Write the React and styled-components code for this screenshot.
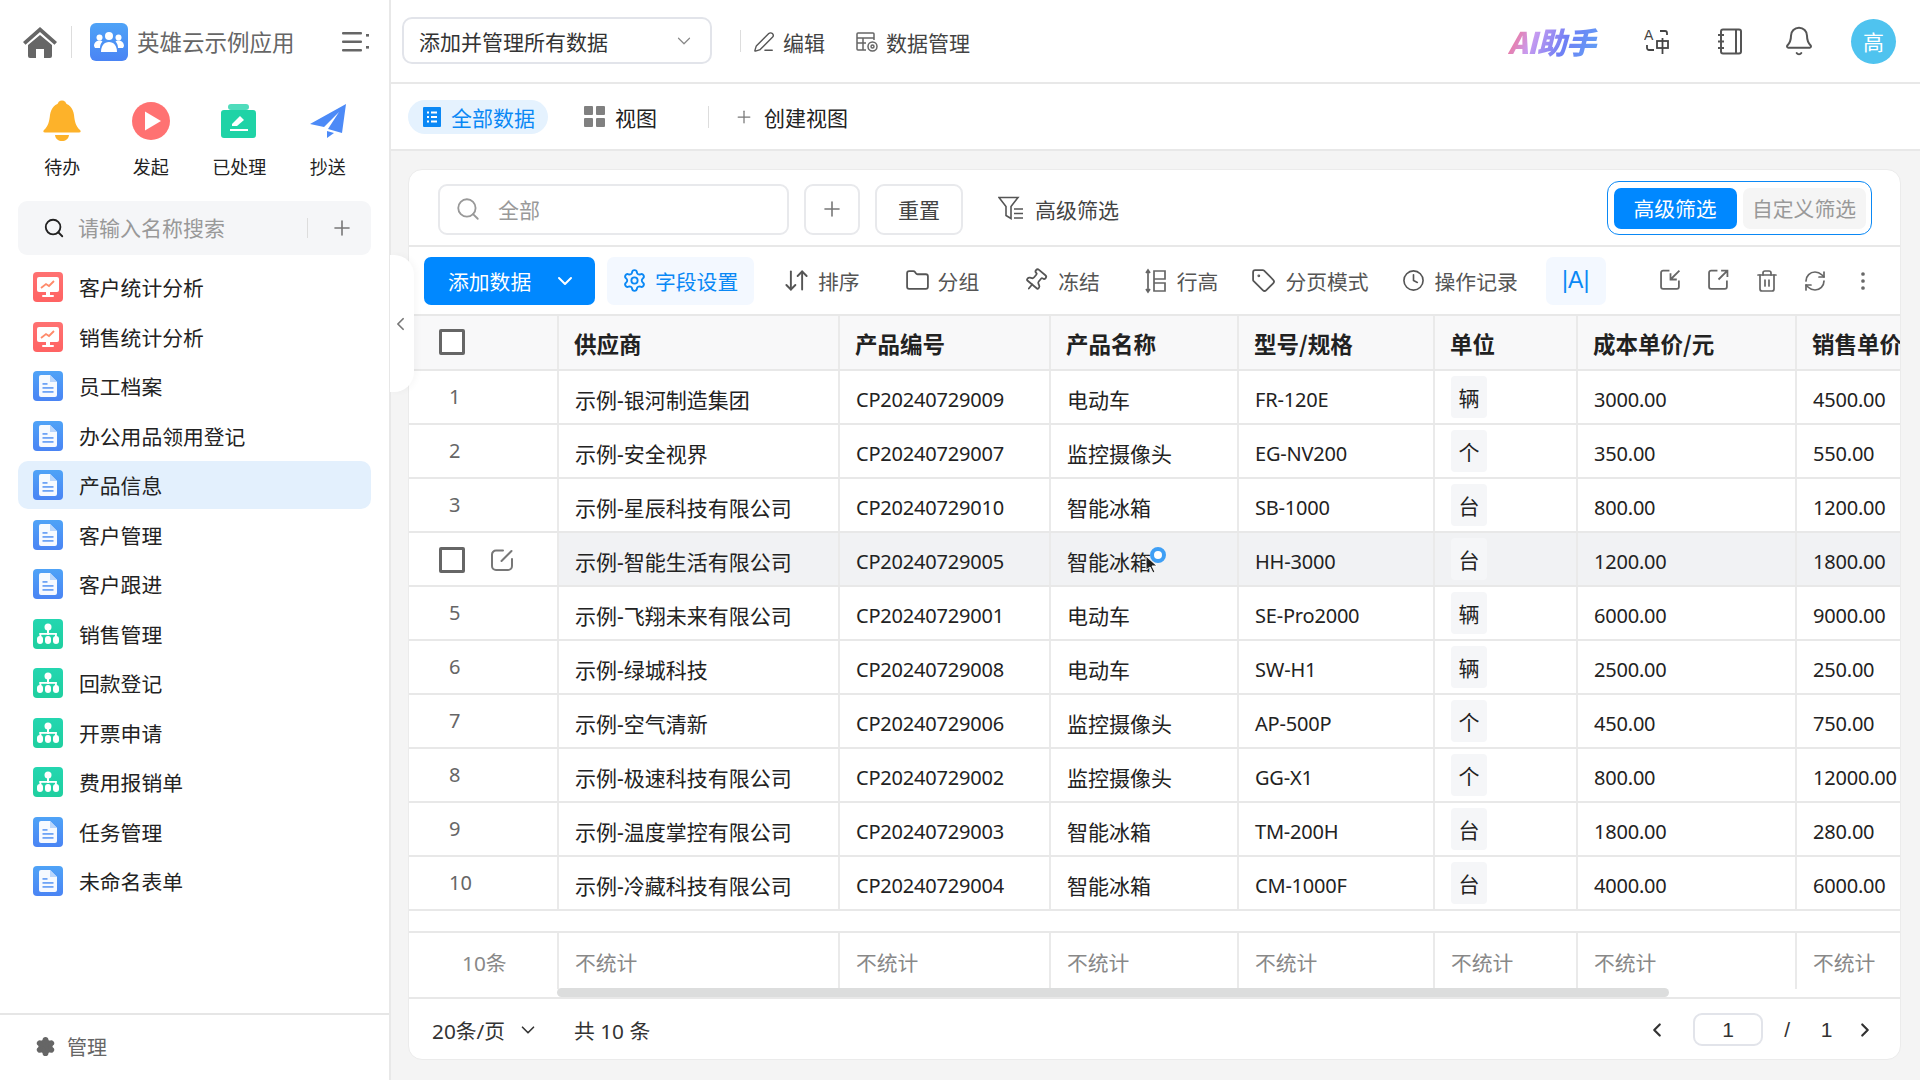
import React from 'react';
import styled, { createGlobalStyle } from 'styled-components';
import { Search, Plus, ChevronDown, ChevronLeft, ChevronRight, Settings, Folder, Pin, Tag, Clock, MoreVertical, Bell, RefreshCw, Trash2, PenLine, ArrowDownUp } from 'lucide-react';

const Global = createGlobalStyle`
  html, body { margin: 0; padding: 0; background: #fff; }
  * { box-sizing: border-box; }
  body { font-family: "Noto Sans", "Noto Sans CJK SC", sans-serif; font-size: 21px; color: #222; }
`;

const Page = styled.div`display: flex; width: 1920px; height: 1080px; overflow: hidden; position: relative; background: #f4f4f4;`;
const Sidebar = styled.aside`width: 391px; flex: none; height: 100%; background: #fff; border-right: 2px solid #e8e8e8; display: flex; flex-direction: column;`;
const SideTop = styled.div`height: 83px; display: flex; align-items: center; padding: 0 0 0 22px; flex: none;`;
const VLine = styled.span`display: block; flex: none; width: 1px; height: ${p => p.$h || 24}px; background: ${p => p.$c || '#ddd'}; margin: 0 ${p => p.$mr ?? 0}px 0 ${p => p.$ml ?? 0}px;`;
const AppBadge = styled.span`width: 38px; height: 38px; border-radius: 6px; background: linear-gradient(#4fa3f7, #4a84f4); display: flex; align-items: center; justify-content: center; flex: none;`;
const AppTitle = styled.span`font-size: 22.5px; line-height: 30px; color: #666; margin-left: 9px; width: 205px; padding-top: 3px;`;
const Quick = styled.div`display: grid; grid-template-columns: repeat(4, 88.5px); padding: 18px 0 0 18px; height: 118px; flex: none;`;
const QuickItem = styled.div`display: flex; flex-direction: column; align-items: center; font-size: 18px; line-height: 24px; color: #222; gap: 14px;`;
const QuickIcon = styled.span`display: flex; height: 40px; align-items: center; justify-content: center;`;
const SideSearch = styled.div`margin: 0 18px; height: 54px; border-radius: 9px; background: #f5f6f8; display: flex; align-items: center; padding-left: 25px; flex: none;`;
const SidePlaceholder = styled.span`color: #999; font-size: 21px; margin-left: 13px; width: 229px; line-height: 28px;`;
const Nav = styled.nav`display: flex; flex-direction: column; gap: 1.5px; padding: 8px 18px 0; flex: 1;`;
const NavItem = styled.div`height: 48px; border-radius: 10px; display: flex; align-items: center; gap: 16px; padding-left: 15px; font-size: 20.8px; color: #222; background: ${p => p.$active ? '#e3f0fd' : 'transparent'};`;
const NavIcon = styled.span`width: 30px; height: 30px; border-radius: 4px; display: flex; align-items: center; justify-content: center; flex: none; background: ${p => p.$bg};`;
const SideFoot = styled.div`height: 67px; border-top: 2px solid #e6e6e6; display: flex; align-items: center; padding: 0 0 2px 35px; gap: 11px; color: #666; font-size: 20px; flex: none;`;

const Collapse = styled.div`position: absolute; left: 390px; top: 255px; width: 24px; height: 137px; background: #fff; border-radius: 0 20px 20px 0; display: flex; align-items: center; justify-content: center; padding-right: 3px; color: #777; box-shadow: 3px 0 6px rgba(0,0,0,.03);`;

const Main = styled.main`flex: 1; display: flex; flex-direction: column; min-width: 0;`;
const Header = styled.header`height: 84px; flex: none; background: #fff; border-bottom: 2px solid #e8e8e8; display: flex; align-items: center; padding: 0 24px 0 11px;`;
const Select = styled.div`width: 310px; height: 47px; border: 2px solid #e2e4ea; border-radius: 10px; display: flex; align-items: center; justify-content: space-between; padding: 0 15px 0 15px; font-size: 21px; color: #333; margin-top: -1px;`;
const HeadBtn = styled.span`display: flex; align-items: center; gap: 8px; color: #444; font-size: 21px; margin-left: ${p => p.$ml}px; padding-top: 1px;`;
const HeadRight = styled.div`margin-left: auto; display: flex; align-items: center;`;
const AiLogo = styled.span`font: italic 900 30px/34px "Noto Sans CJK SC", "Noto Sans", sans-serif; letter-spacing: -0.8px; background: linear-gradient(115deg, #ff6a7a 0%, #c89bf0 30%, #6f7ff5 62%, #5fa2f5 100%); -webkit-background-clip: text; background-clip: text; color: transparent; width: 90px; white-space: nowrap;`;
const HeadIcon = styled.span`display: flex; color: #555; margin-left: ${p => p.$ml}px;`;
const Avatar = styled.span`width: 45px; height: 45px; border-radius: 50%; background: #4fc3ef; color: #fff; font-size: 21px; display: flex; align-items: center; justify-content: center; margin-left: ${p => p.$ml}px;`;

const TabBar = styled.div`height: 67px; flex: none; background: #fff; border-bottom: 2px solid #e8e8e8; display: flex; align-items: center; padding: 0 0 0 17px; font-size: 21px;`;
const ActiveTab = styled.span`height: 34px; width: 140px; border-radius: 17px; background: #e5f2fe; color: #0a88f5; display: flex; align-items: center; gap: 10px; padding-left: 15px;`;
const Tab = styled.span`display: flex; align-items: center; gap: 10px; color: #222; margin-left: ${p => p.$ml}px;`;

const Content = styled.div`flex: 1; padding: 18px 19px 20px 17px; min-height: 0;`;
const Card = styled.section`height: 100%; background: #fff; border: 1px solid #ebebeb; border-radius: 14px; display: flex; flex-direction: column; overflow: hidden;`;
const FilterRow = styled.div`height: 77px; flex: none; border-bottom: 2px solid #e8e8e8; display: flex; align-items: center; padding: 0 29px 0 30px; margin: 0 -1px;`;
const SearchBox = styled.div`width: 351px; height: 51px; border: 2px solid #e8e9ec; border-radius: 9px; display: flex; align-items: center; gap: 17px; padding: 0 0 2px 15px; color: #999; margin-top: 4px;`;
const OutlineBtn = styled.div`height: 51px; width: ${p => p.$w}px; margin-left: ${p => p.$ml}px; border: 2px solid #e8e9ec; border-radius: 9px; display: flex; align-items: center; justify-content: center; padding-bottom: 2px; color: #444; margin-top: 4px;`;
const AdvFilter = styled.span`display: flex; align-items: center; gap: 10px; color: #444; margin: 2px 0 0 35px;`;
const Toggle = styled.div`margin: 1px 0 0 auto; width: 265px; height: 54px; border: 1.5px solid #0a88f5; border-radius: 12px; padding: 5.5px; display: flex; gap: 6px;`;
const ToggleBtn = styled.span`flex: 1; border-radius: 7px; display: flex; align-items: center; justify-content: center; font-size: 20.8px; background: ${p => p.$on ? '#0088ff' : '#f5f5f5'}; color: ${p => p.$on ? '#fff' : '#999'};`;

const Toolbar = styled.div`height: 67px; flex: none; display: flex; align-items: center; padding: 0 0 0 15px; font-size: 20.8px; color: #555;`;
const AddBtn = styled.div`width: 171px; height: 48px; border-radius: 7px; background: #0088ff; color: #fff; display: flex; align-items: center; justify-content: space-between; padding: 0 18px 0 24px;`;
const FieldBtn = styled.div`width: 147px; height: 48px; border-radius: 7px; margin-left: 12px; background: #f3f8ff; color: #0a88f5; display: flex; align-items: center; gap: 8px; padding-left: 15px;`;
const ToolItem = styled.span`display: flex; align-items: center; gap: ${p => p.$gap ?? 10}px; margin-left: ${p => p.$ml}px; white-space: nowrap;`;
const FontBtn = styled.span`width: 60px; height: 48px; border-radius: 7px; background: #f3f8ff; color: #0a88f5; display: flex; align-items: center; justify-content: center; margin-left: 28px; font-family: "Liberation Sans", sans-serif; font-size: 23px;`;
const ToolIcons = styled.div`margin-left: 41px; display: grid; grid-template-columns: repeat(5, 48px); justify-items: center; color: #666;`;

const columns = '148px 281px 211px 188px 196px 143px 219px 106px';
const HeadRow = styled.div`height: 57px; flex: none; display: grid; grid-template-columns: ${columns}; background: #f8f8f9; border-top: 2px solid #e8e8e8; border-bottom: 2px solid #e8e8e8; font-weight: 700; color: #222; white-space: nowrap; font-family: "Noto Sans CJK SC", sans-serif; font-size: 22.5px;`;
const HeadCell = styled.div`display: flex; align-items: center; padding: 0 0 ${p => p.$first ? 1 : 0}px ${p => p.$pl ?? 16}px; border-left: ${p => p.$first ? 0 : '2px solid #eaeaea'}; overflow: hidden;`;
const Row = styled.div`height: 54px; flex: none; display: grid; grid-template-columns: ${columns}; border-bottom: 2px solid #e8e8e8;`;
const IndexCell = styled.div`display: flex; align-items: center; padding: 0 0 1px 40px; color: #666; font-size: 20px;`;
const HoverIndex = styled.div`display: flex; align-items: center; padding: 1px 0 0 30px; gap: 25px; color: #777;`;
const Cell = styled.div`display: flex; align-items: center; padding: ${p => p.$latin ? 5 : 3}px 0 0 ${p => p.$pl ?? 16}px; border-left: 2px solid #eaeaea; white-space: nowrap; overflow: hidden; font-size: ${p => p.$latin ? 20 : 21}px; letter-spacing: ${p => p.$latin ? '-0.2px' : 0}; color: #222; background: ${p => p.$hover ? '#f1f2f4' : 'transparent'};`;
const UnitTag = styled.span`width: 36px; height: 42px; border-radius: 4px; background: #f5f6f8; display: flex; align-items: center; justify-content: center; margin-top: -3px;`;
const CheckBox = styled.span`display: block; width: 26px; height: 26px; border: 3px solid #666; border-radius: 2px; flex: none; background: #fff;`;
const Spacer = styled.div`height: 22px; flex: none; border-bottom: 2px solid #e8e8e8;`;
const SumWrap = styled.div`height: 66px; flex: none; position: relative; border-bottom: 2px solid #e8e8e8;`;
const SumRow = styled.div`height: 56px; display: grid; grid-template-columns: ${columns}; color: #888; font-size: 20.8px;`;
const SumCell = styled.div`display: flex; align-items: center; padding: 1px 0 0 ${p => p.$pl ?? 16}px; border-left: ${p => p.$first ? 0 : '2px solid #eaeaea'};`;
const ScrollBar = styled.div`position: absolute; left: 148px; bottom: 0; width: 1112px; height: 9px; background: #dcdddd; border-radius: 5px;`;
const Pager = styled.div`flex: 1; display: flex; align-items: center; padding: 1px 0 0 23px; color: #333; font-size: 20.8px;`;
const PageSize = styled.span`display: flex; align-items: center; gap: 12px; width: 142px;`;
const PagerRight = styled.div`margin-left: auto; display: flex; align-items: center; padding-right: 24px; font-family: "Liberation Sans", sans-serif; font-size: 21px;`;
const PageInput = styled.span`width: 70px; height: 33px; border: 2px solid #e2e4ea; border-radius: 9px; display: flex; align-items: center; justify-content: center; margin: 0 21px 0 25px;`;
const PageTotal = styled.span`width: 62px; text-align: center; padding-left: 11px;`;

const CursorRing = styled.span`position: absolute; left: 1150px; top: 547px; width: 16px; height: 16px; border-radius: 50%; border: 4px solid #3f9ff5; background: #fff;`;
const CursorArrow = styled.svg`position: absolute; left: 1145px; top: 555px;`;

const Home = () => <svg width="36" height="34" viewBox="0 0 36 34"><path d="M18 2 1 17l2.500 2.800L18 7l14.500 12.800L35 17z" fill="#666"/><path d="M6 20 18 10l12 10v11a2 2 0 0 1-2 2h-6v-9h-8v9H8a2 2 0 0 1-2-2z" fill="#666"/></svg>;
const People = () => <svg width="30" height="22" viewBox="0 0 30 22" fill="#fff"><circle cx="15" cy="5" r="4"/><circle cx="5.500" cy="6.500" r="3"/><circle cx="24.500" cy="6.500" r="3"/><path d="M7 21c0-6 3-10 8-10s8 4 8 10z"/><path d="M0 15c0-3 2-5.500 5.500-5.500 1.500 0 2.500.5 3 1C7 12 6 14 6 17H1zM30 15c0-3-2-5.500-5.500-5.500-1.500 0-2.500.5-3 1 1.500 1.500 2.500 3.500 2.500 6.500h5z"/></svg>;
const MenuDots = () => <svg width="28" height="22" viewBox="0 0 28 22" fill="#666"><rect width="20" height="2.600" x="0" y="1" rx="1"/><rect width="20" height="2.600" x="0" y="9.500" rx="1"/><rect width="20" height="2.600" x="0" y="18" rx="1"/><rect width="3" height="2.600" x="24" y="3"/><rect width="3" height="2.600" x="24" y="15"/></svg>;
const BellFill = () => <svg width="40" height="42" viewBox="0 0 40 42"><circle cx="20" cy="5" r="4.500" fill="#fdb22a"/><path d="M20 3c-7 0-11 5-12 12-.7 6-1.500 11-6 15-1 1-1 2.500 1 2.500h34c2 0 2-1.500 1-2.500-4.500-4-5.300-9-6-15C31 8 27 3 20 3z" fill="#fdb22a"/><path d="M13 35h14c-.5 4-3.500 6-7 6s-6.500-2-7-6z" fill="#fdb22a"/></svg>;
const Play = () => <svg width="40" height="40" viewBox="0 0 40 40"><circle cx="20" cy="20" r="19" fill="#ff7272"/><path d="M14 10.500 30 20l-16 9.500z" fill="#fff"/></svg>;
const Done = () => <svg width="36" height="34" viewBox="0 0 36 34"><rect x="7" y="0" width="21" height="6" rx="3" fill="#4fdcbc"/><rect x="0" y="6" width="35" height="28" rx="3" fill="#1fd3a6"/><path d="M11 20 19 12l4 4-7 6h-5z" fill="#fff"/><rect x="9" y="25" width="18" height="2" fill="#fff"/></svg>;
const Plane = () => <svg width="38" height="36" viewBox="0 0 38 36"><path d="M37 1 1 21l14 3L30 9 19 26l14 4z" fill="#4c8af7"/><path d="M18 28v7l7-5z" fill="#4c8af7"/></svg>;
const Doc = () => <svg width="18" height="22" viewBox="0 0 18 22"><path d="M2 0h9l7 7v13a2 2 0 0 1-2 2H2a2 2 0 0 1-2-2V2a2 2 0 0 1 2-2z" fill="#fff" opacity=".95"/><path d="M11 0l7 7h-7z" fill="#b9d6fc"/><rect x="3.500" y="8" width="5" height="1.800" fill="#6ea4f6"/><rect x="3.500" y="12" width="11" height="1.800" fill="#6ea4f6"/><rect x="3.500" y="16" width="11" height="1.800" fill="#6ea4f6"/></svg>;
const Chart = () => <svg width="22" height="22" viewBox="0 0 22 22"><rect x="0" y="1" width="22" height="15" rx="2" fill="#fff"/><rect x="9" y="16" width="4" height="3" fill="#fff"/><rect x="5" y="19" width="12" height="2" rx="1" fill="#fff"/><path d="M4 12l5-4 3 2 5-5" stroke="#ff8a6a" strokeWidth="1.800" fill="none"/></svg>;
const Org = () => <svg width="24" height="22" viewBox="0 0 24 22" fill="#fff"><circle cx="12" cy="4" r="3.500"/><rect x="11" y="6" width="2" height="6"/><rect x="3.500" y="10" width="17" height="1.800"/><rect x="3.500" y="10" width="1.800" height="4"/><rect x="19" y="10" width="1.800" height="4"/><rect x="1" y="13" width="6" height="8" rx="3"/><rect x="9" y="13" width="6" height="8" rx="3"/><rect x="17" y="13" width="6" height="8" rx="3"/></svg>;
const Translate = () => <svg width="26" height="26" viewBox="0 0 26 26" fill="none" stroke="#444" strokeWidth="1.800"><text x="0" y="12" fontSize="14" fill="#444" stroke="none" fontFamily="Liberation Sans">A</text><path d="M16 3h5a2 2 0 0 1 2 2v2M10 22H5a2 2 0 0 1-2-2v-3"/><rect x="13" y="13" width="11" height="7"/><path d="M18.500 10v16"/></svg>;
const Notebook = () => <svg width="26" height="27" viewBox="0 0 26 27" fill="none" stroke="#555" strokeWidth="2"><rect x="4" y="1.500" width="20" height="24" rx="2"/><path d="M19 1.500v24M1 7h6M1 13.500h6M1 20h6"/></svg>;
const DataMgr = () => <svg width="22" height="20" viewBox="0 0 22 20" fill="none" stroke="#666" strokeWidth="1.500"><path d="M10 18H2a1 1 0 0 1-1-1V2a1 1 0 0 1 1-1h15a1 1 0 0 1 1 1v6M1 6h17M1 11h9M7 6v12"/><circle cx="16.500" cy="14.500" r="4.500"/><circle cx="16.500" cy="14.500" r="1.500"/></svg>;
const Grid = () => <svg width="21" height="21" viewBox="0 0 21 21" fill="#808080"><rect width="9" height="9" rx="1"/><rect x="12" width="9" height="9" rx="1"/><rect y="12" width="9" height="9" rx="1"/><rect x="12" y="12" width="9" height="9" rx="1"/></svg>;
const TableIco = () => <svg width="18" height="20" viewBox="0 0 18 20"><rect width="18" height="20" rx="1" fill="#0a88f5"/><path d="M4 5.500h2M8 5.500h6M4 10h2M8 10h6M4 14.500h2M8 14.500h6" stroke="#fff" strokeWidth="2"/></svg>;
const FilterIco = () => <svg width="27" height="25" viewBox="0 0 27 25" fill="none" stroke="#555" strokeWidth="1.600"><path d="M1 1.500h19l-7 9v12l-5-3v-9z"/><path d="M16 13h9M16 17.500h9M16 22h9"/></svg>;
const RowHeight = () => <svg width="22" height="26" viewBox="0 0 22 26" fill="none" stroke="#666" strokeWidth="1.700"><path d="M3 2v22M1 5l2-3 2 3M1 21l2 3 2-3"/><path d="M9 3h11v8H9zM9 3v20M9 15h11v8H9z"/></svg>;
const ImportI = () => <svg width="21" height="21" viewBox="0 0 20 20" fill="none" stroke="#666" strokeWidth="1.700"><path d="M9 1.500H3a2 2 0 0 0-2 2V17a2 2 0 0 0 2 2h13a2 2 0 0 0 2-2v-6"/><path d="M18.500 1.500 10 10M10 4v6h6"/></svg>;
const ExportI = () => <svg width="21" height="21" viewBox="0 0 20 20" fill="none" stroke="#666" strokeWidth="1.700"><path d="M9 1.500H3a2 2 0 0 0-2 2V17a2 2 0 0 0 2 2h13a2 2 0 0 0 2-2v-6"/><path d="M10 10l8.500-8.500M12.500 1.500h6v6"/></svg>;
const EditRow = () => <svg width="24" height="24" viewBox="0 0 24 24" fill="none" stroke="#777" strokeWidth="2" strokeLinecap="round"><path d="M13 2.500H6a4 4 0 0 0-4 4V18a4 4 0 0 0 4 4h12a4 4 0 0 0 4-4v-7"/><path d="M21.500 3 11.500 13"/></svg>;

const I = { size: 24, strokeWidth: 1.7 };
const nav = [
  ['客户统计分析', 'c'], ['销售统计分析', 'c'], ['员工档案', 'd'], ['办公用品领用登记', 'd'], ['产品信息', 'd', true], ['客户管理', 'd'], ['客户跟进', 'd'],
  ['销售管理', 'o'], ['回款登记', 'o'], ['开票申请', 'o'], ['费用报销单', 'o'], ['任务管理', 'd'], ['未命名表单', 'd'],
];
const navBg = { c: 'linear-gradient(#ff7272,#ff6363)', d: 'linear-gradient(#4fa3f7,#4a84f4)', o: 'linear-gradient(#24d6b0,#1fcf9f)' };
const navIcon = { c: <Chart />, d: <Doc />, o: <Org /> };
const rows = [
  ['示例-银河制造集团', 'CP20240729009', '电动车', 'FR-120E', '辆', '3000.00', '4500.00'],
  ['示例-安全视界', 'CP20240729007', '监控摄像头', 'EG-NV200', '个', '350.00', '550.00'],
  ['示例-星辰科技有限公司', 'CP20240729010', '智能冰箱', 'SB-1000', '台', '800.00', '1200.00'],
  ['示例-智能生活有限公司', 'CP20240729005', '智能冰箱', 'HH-3000', '台', '1200.00', '1800.00'],
  ['示例-飞翔未来有限公司', 'CP20240729001', '电动车', 'SE-Pro2000', '辆', '6000.00', '9000.00'],
  ['示例-绿城科技', 'CP20240729008', '电动车', 'SW-H1', '辆', '2500.00', '250.00'],
  ['示例-空气清新', 'CP20240729006', '监控摄像头', 'AP-500P', '个', '450.00', '750.00'],
  ['示例-极速科技有限公司', 'CP20240729002', '监控摄像头', 'GG-X1', '个', '800.00', '12000.00'],
  ['示例-温度掌控有限公司', 'CP20240729003', '智能冰箱', 'TM-200H', '台', '1800.00', '280.00'],
  ['示例-冷藏科技有限公司', 'CP20240729004', '智能冰箱', 'CM-1000F', '台', '4000.00', '6000.00'],
];
const heads = ['供应商', '产品编号', '产品名称', '型号/规格', '单位', '成本单价/元', '销售单价'];

export default function App() {
  return (
    <Page>
      <Global />
      <Sidebar>
        <SideTop>
          <Home />
          <VLine $h={32} $ml={13} $mr={18} />
          <AppBadge><People /></AppBadge>
          <AppTitle>英雄云示例应用</AppTitle>
          <MenuDots />
        </SideTop>
        <Quick>
          <QuickItem><QuickIcon><BellFill /></QuickIcon>待办</QuickItem>
          <QuickItem><QuickIcon><Play /></QuickIcon>发起</QuickItem>
          <QuickItem><QuickIcon><Done /></QuickIcon>已处理</QuickItem>
          <QuickItem><QuickIcon><Plane /></QuickIcon>抄送</QuickItem>
        </Quick>
        <SideSearch>
          <Search size={22} strokeWidth={2} color="#222" />
          <SidePlaceholder>请输入名称搜索</SidePlaceholder>
          <VLine $h={20} />
          <Plus size={24} strokeWidth={1.6} color="#777" style={{ marginLeft: 22 }} />
        </SideSearch>
        <Nav>
          {nav.map(([t, k, a]) => (
            <NavItem key={t} $active={a}><NavIcon $bg={navBg[k]}>{navIcon[k]}</NavIcon>{t}</NavItem>
          ))}
        </Nav>
        <SideFoot><Settings size={21} color="#666" fill="#666" strokeWidth={2} />管理</SideFoot>
      </Sidebar>
      <Collapse><ChevronLeft size={22} strokeWidth={2} /></Collapse>
      <Main>
        <Header>
          <Select>添加并管理所有数据<ChevronDown size={22} strokeWidth={1.300} color="#888" /></Select>
          <VLine $h={22} $ml={28} />
          <HeadBtn $ml={12}><PenLine size={22} strokeWidth={1.500} color="#555" />编辑</HeadBtn>
          <HeadBtn $ml={31}><DataMgr />数据管理</HeadBtn>
          <HeadRight>
            <AiLogo>AI助手</AiLogo>
            <HeadIcon $ml={46}><Translate /></HeadIcon>
            <HeadIcon $ml={47}><Notebook /></HeadIcon>
            <HeadIcon $ml={40}><Bell size={32} strokeWidth={1.500} /></HeadIcon>
            <Avatar $ml={36}>高</Avatar>
          </HeadRight>
        </Header>
        <TabBar>
          <ActiveTab><TableIco />全部数据</ActiveTab>
          <Tab $ml={36}><Grid />视图</Tab>
          <VLine $h={22} $ml={51} />
          <Tab $ml={25}><Plus size={20} strokeWidth={1.500} color="#777" />创建视图</Tab>
        </TabBar>
        <Content>
          <Card>
            <FilterRow>
              <SearchBox><Search size={26} strokeWidth={1.700} color="#999" />全部</SearchBox>
              <OutlineBtn $w={56} $ml={15}><Plus size={24} strokeWidth={1.600} color="#777" /></OutlineBtn>
              <OutlineBtn $w={88} $ml={15}>重置</OutlineBtn>
              <AdvFilter><FilterIco />高级筛选</AdvFilter>
              <Toggle><ToggleBtn $on>高级筛选</ToggleBtn><ToggleBtn>自定义筛选</ToggleBtn></Toggle>
            </FilterRow>
            <Toolbar>
              <AddBtn>添加数据<ChevronDown size={24} strokeWidth={2} /></AddBtn>
              <FieldBtn><Settings size={25} strokeWidth={1.800} />字段设置</FieldBtn>
              <ToolItem $ml={29} $gap={8}><ArrowDownUp {...I} size={27} />排序</ToolItem>
              <ToolItem $ml={45} $gap={8}><Folder {...I} size={25} />分组</ToolItem>
              <ToolItem $ml={44} $gap={10}><Pin {...I} size={25} style={{ transform: 'rotate(40deg)' }} />冻结</ToolItem>
              <ToolItem $ml={45}><RowHeight />行高</ToolItem>
              <ToolItem $ml={33} $gap={9}><Tag {...I} size={25} />分页模式</ToolItem>
              <ToolItem $ml={33}><Clock {...I} size={23} />操作记录</ToolItem>
              <FontBtn>|A|</FontBtn>
              <ToolIcons>
                <ImportI />
                <ExportI />
                <Trash2 {...I} />
                <RefreshCw {...I} />
                <MoreVertical {...I} />
              </ToolIcons>
            </Toolbar>
            <HeadRow>
              <HeadCell $first $pl={30}><CheckBox /></HeadCell>
              {heads.map(h => <HeadCell key={h} $pl={15}>{h}</HeadCell>)}
            </HeadRow>
            {rows.map((r, i) => {
              const hover = i === 3;
              return (
                <Row key={r[1]}>
                  {hover
                    ? <HoverIndex><CheckBox /><EditRow /></HoverIndex>
                    : <IndexCell>{i + 1}</IndexCell>}
                  <Cell $hover={hover}>{r[0]}</Cell>
                  <Cell $hover={hover} $latin>{r[1]}</Cell>
                  <Cell $hover={hover}>{r[2]}</Cell>
                  <Cell $hover={hover} $latin>{r[3]}</Cell>
                  <Cell $hover={hover}><UnitTag>{r[4]}</UnitTag></Cell>
                  <Cell $hover={hover} $latin>{r[5]}</Cell>
                  <Cell $hover={hover} $latin>{r[6]}</Cell>
                </Row>
              );
            })}
            <Spacer />
            <SumWrap>
              <SumRow>
                <SumCell $first $pl={53}>10条</SumCell>
                {heads.map(h => <SumCell key={h}>不统计</SumCell>)}
              </SumRow>
              <ScrollBar />
            </SumWrap>
            <Pager>
              <PageSize>20条/页<ChevronDown size={22} strokeWidth={1.800} /></PageSize>
              共 10 条
              <PagerRight>
                <ChevronLeft size={22} strokeWidth={2.400} />
                <PageInput>1</PageInput>
                /
                <PageTotal>1</PageTotal>
                <ChevronRight size={22} strokeWidth={2.400} style={{ marginLeft: 2 }} />
              </PagerRight>
            </Pager>
          </Card>
        </Content>
      </Main>
      <CursorRing />
      <CursorArrow width="14" height="20" viewBox="0 0 14 20"><path d="M1 1v14l4-3 3 6 2-1-3-6h5z" fill="#222" stroke="#fff" strokeWidth="1" /></CursorArrow>
    </Page>
  );
}
